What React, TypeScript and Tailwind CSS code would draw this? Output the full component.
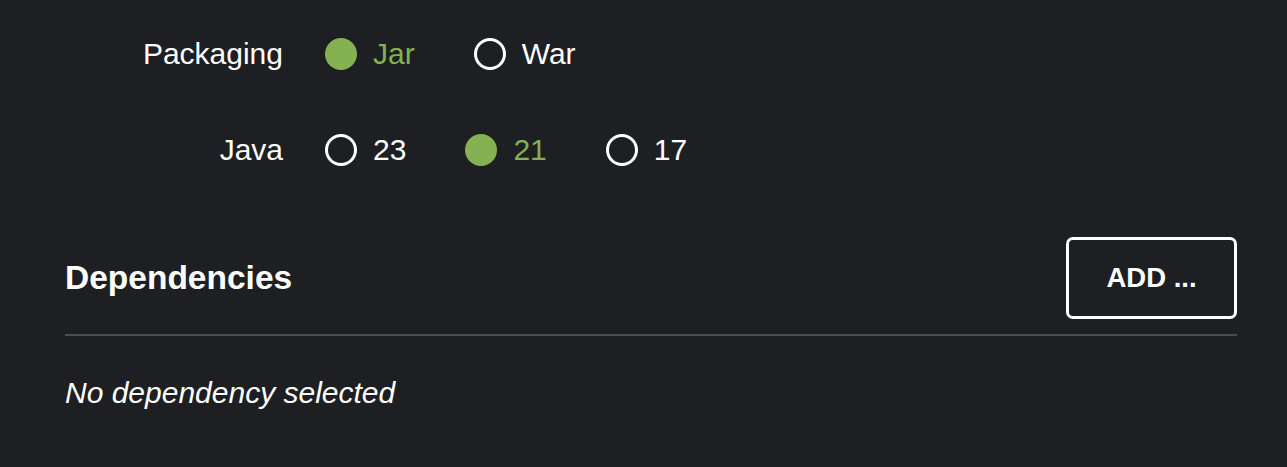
import React from "react";

const Radio = ({ checked, label }: { checked: boolean; label: string }) => (
  <div className="flex items-center mr-[59px]">
    {checked ? (
      <span className="block w-[32px] h-[32px] rounded-full bg-[#84b151]" />
    ) : (
      <span className="block w-[32px] h-[32px] rounded-full border-[3px] border-white" />
    )}
    <span className={`ml-[16px] text-[30px] leading-none ${checked ? "text-[#84b151]" : "text-white"}`}>{label}</span>
  </div>
);

export default function App() {
  return (
    <div
      className="w-[1287px] h-[467px] bg-[#1d1f23] text-white pl-[65px] pr-[50px] pt-[34px] overflow-hidden"
      style={{ fontFamily: '"Liberation Sans", Arial, sans-serif' }}
    >
      <div className="flex items-center h-[40px]">
        <div className="w-[218px] text-right text-[30px] leading-none">Packaging</div>
        <div className="flex items-center ml-[42px]">
          <Radio checked label="Jar" />
          <Radio checked={false} label="War" />
        </div>
      </div>
      <div className="flex items-center h-[40px] mt-[56px]">
        <div className="w-[218px] text-right text-[30px] leading-none">Java</div>
        <div className="flex items-center ml-[42px]">
          <Radio checked={false} label="23" />
          <Radio checked label="21" />
          <Radio checked={false} label="17" />
        </div>
      </div>
      <div className="mt-[67px] flex items-center justify-between">
        <h2 className="text-[33.5px] font-bold leading-none">Dependencies</h2>
        <button className="w-[171px] h-[82px] border-[3px] border-white rounded-[7px] text-[27.5px] font-bold text-white leading-none">
          ADD ...
        </button>
      </div>
      <div className="mt-[15px] h-[2px] bg-[#4a4c51]" />
      <div className="mt-[40px] italic text-[30px] leading-[34px]">No dependency selected</div>
    </div>
  );
}
